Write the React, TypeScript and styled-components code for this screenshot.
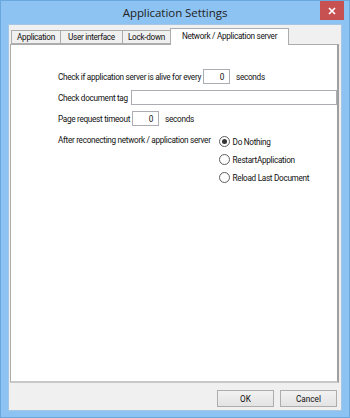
import { useState } from 'react';
import styled, { createGlobalStyle } from 'styled-components';

const GlobalStyle = createGlobalStyle`
  html, body {
    margin: 0;
    padding: 0;
    background: #8dc3f3;
  }
  body {
    font-family: Roboto, 'Open Sans', sans-serif;
    font-size: 8.2px;
    letter-spacing: -0.3px;
    color: #111;
  }
`;

const tabs = [
  { label: 'Application', width: 50 },
  { label: 'User interface', width: 63 },
  { label: 'Lock-down', width: 49 },
  { label: 'Network / Application server', width: 119 },
];
const actions = ['Do Nothing', 'RestartApplication', 'Reload Last Document'];

const App = () => {
  const [activeTab, setActiveTab] = useState(3);
  const [action, setAction] = useState(0);

  return (
    <>
      <GlobalStyle />
      <Window>
        <TitleBar>
          <Title>Application Settings</Title>
          <CloseButton>
            <svg width="8" height="8" viewBox="0 0 8 8">
              <path d="M1 1 L7 7 M7 1 L1 7" stroke="#fff" strokeWidth="1.7" />
            </svg>
          </CloseButton>
        </TitleBar>
        <Client>
          <TabStrip>
            {tabs.map((tab, i) => (
              <Tab
                key={tab.label}
                $active={i === activeTab}
                $width={tab.width}
                onClick={() => setActiveTab(i)}
              >
                {tab.label}
              </Tab>
            ))}
          </TabStrip>
          <Panel>
            <Row $top={24}>
              <span>Check if application server is alive for every</span>
              <NumberBox>0</NumberBox>
              <Suffix>seconds</Suffix>
            </Row>
            <Row $top={6}>
              <span>Check document tag</span>
              <TextBox />
            </Row>
            <Row $top={6}>
              <span>Page request timeout</span>
              <NumberBox>0</NumberBox>
              <Suffix>seconds</Suffix>
            </Row>
            <ReconnectRow>
              <ReconnectLabel>After reconecting network / application server</ReconnectLabel>
              <RadioGroup>
                {actions.map((a, i) => (
                  <RadioOption key={a} onClick={() => setAction(i)}>
                    <RadioCircle $checked={i === action} />
                    <span>{a}</span>
                  </RadioOption>
                ))}
              </RadioGroup>
            </ReconnectRow>
          </Panel>
          <ButtonBar>
            <DialogButton>OK</DialogButton>
            <DialogButton>Cancel</DialogButton>
          </ButtonBar>
        </Client>
      </Window>
    </>
  );
};

export default App;

const Window = styled.div`
  width: 350px;
  height: 418px;
  box-sizing: border-box;
  border: 1px solid #6aa7dc;
  background: #8dc3f3;
  display: flex;
  flex-direction: column;
  padding: 0 7px 6px 7px;
  overflow: hidden;
`;

const TitleBar = styled.div`
  height: 23px;
  flex: none;
  position: relative;
  display: flex;
  align-items: center;
  justify-content: center;
`;

const Title = styled.div`
  font-family: 'Open Sans', sans-serif;
  font-size: 11.5px;
  letter-spacing: -0.05px;
  color: #222;
`;

const CloseButton = styled.div`
  position: absolute;
  top: 0;
  right: -2px;
  width: 24px;
  height: 19px;
  background: #c75050;
  display: flex;
  align-items: center;
  justify-content: center;
`;

const Client = styled.div`
  flex: 1;
  min-width: 0;
  background: #f0f0f0;
  border: 1px solid #a7c6e3;
  display: flex;
  flex-direction: column;
  padding: 2px 2px 3px 1px;
`;

const TabStrip = styled.div`
  display: flex;
  align-items: flex-end;
  height: 17px;
  padding-left: 2px;
  position: relative;
  z-index: 1;
`;

const Tab = styled.div<{ $active: boolean; $width: number }>`
  box-sizing: border-box;
  width: ${({ $width }) => $width}px;
  border: 1px solid #acacac;
  border-bottom: ${({ $active }) => ($active ? 'none' : '1px solid #acacac')};
  margin-left: -1px;
  background: ${({ $active }) => ($active ? '#ffffff' : '#f0f0f0')};
  height: ${({ $active }) => ($active ? '17px' : '14px')};
  margin-bottom: ${({ $active }) => ($active ? '-1px' : '0')};
  padding-bottom: ${({ $active }) => ($active ? '2px' : '0')};
  display: flex;
  align-items: center;
  justify-content: center;
  white-space: nowrap;
  cursor: default;
`;

const Panel = styled.div`
  flex: 1;
  min-width: 0;
  background: #ffffff;
  border: 1px solid #acacac;
  border-right: 2px solid #a0a0a0;
  border-bottom: 2px solid #c8c8c8;
  padding-left: 47px;
  display: flex;
  flex-direction: column;
`;

const Row = styled.div<{ $top: number }>`
  display: flex;
  align-items: center;
  margin-top: ${({ $top }) => $top}px;
  height: 15px;
  white-space: nowrap;
`;

const NumberBox = styled.div`
  box-sizing: border-box;
  width: 27px;
  height: 15px;
  border: 1px solid #abadb3;
  background: #fff;
  margin-left: 2px;
  padding-right: 5px;
  display: flex;
  align-items: center;
  justify-content: flex-end;
`;

const TextBox = styled.div`
  box-sizing: border-box;
  width: 217px;
  height: 15px;
  border: 1px solid #abadb3;
  background: #fff;
  margin-left: 3px;
`;

const Suffix = styled.span`
  margin-left: 6px;
`;

const ReconnectRow = styled.div`
  display: flex;
  align-items: flex-start;
  margin-top: 8px;
  white-space: nowrap;
`;

const ReconnectLabel = styled.span`
  margin-top: 1px;
`;

const RadioGroup = styled.div`
  display: flex;
  flex-direction: column;
  gap: 3px;
  margin-left: 8px;
`;

const RadioOption = styled.div`
  display: flex;
  align-items: center;
  gap: 3px;
  height: 15px;
  cursor: default;
`;

const RadioCircle = styled.span<{ $checked: boolean }>`
  box-sizing: border-box;
  width: 11px;
  height: 11px;
  border-radius: 50%;
  border: 1px solid #5e5e5e;
  background: #fdfdfd;
  display: flex;
  align-items: center;
  justify-content: center;

  &::after {
    content: '';
    width: 5px;
    height: 5px;
    border-radius: 50%;
    background: #333;
    display: ${({ $checked }) => ($checked ? 'block' : 'none')};
  }
`;

const ButtonBar = styled.div`
  display: flex;
  justify-content: flex-end;
  gap: 6px;
  padding-top: 7px;
  padding-right: 2px;
`;

const DialogButton = styled.div`
  box-sizing: border-box;
  width: 57px;
  height: 17px;
  border: 1px solid #adadad;
  background: linear-gradient(#f2f2f2, #e3e3e3);
  display: flex;
  align-items: center;
  justify-content: center;
  letter-spacing: 0;
  cursor: default;
`;
